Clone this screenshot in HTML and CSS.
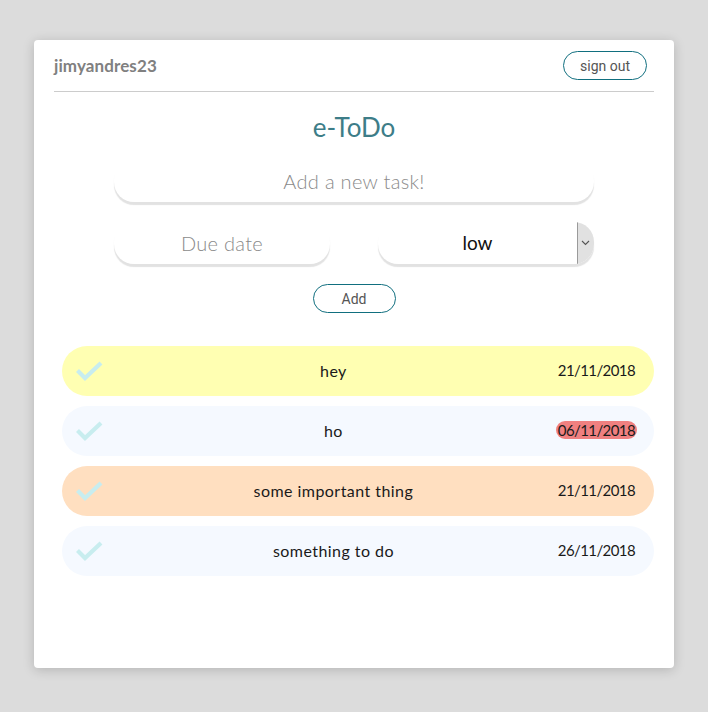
FILE: index.html
```html
<!DOCTYPE html>
<html>
<head>
<meta charset="utf-8">
<link rel="stylesheet" href="styles.css">
</head>
<body>
<div class="card">
  <header class="top">
    <span class="user">jimyandres23</span>
    <button class="btn signout">sign out</button>
  </header>
  <h1 class="title">e-ToDo</h1>
  <form class="form">
    <div class="field wide"><span class="ph">Add a new task!</span></div>
    <div class="row">
      <div class="field half"><span class="ph">Due date</span></div>
      <div class="field half select">
        <span class="val">low</span>
        <span class="arrow"><svg width="9" height="6" viewBox="0 0 9 6"><path d="M1 1 L4.5 4.5 L8 1" fill="none" stroke="#555" stroke-width="1.1"/></svg></span>
      </div>
    </div>
    <button type="button" class="btn add">Add</button>
  </form>
  <ul class="list">
    <li class="item yellow">
      <svg class="check" width="30" height="22" viewBox="0 0 30 22"><path d="M2.5 10.5 L10 18 L26 3" fill="none" stroke="#c8edef" stroke-width="4.2"/></svg>
      <span class="text">hey</span>
      <span class="date">21/11/2018</span>
    </li>
    <li class="item pale">
      <svg class="check" width="30" height="22" viewBox="0 0 30 22"><path d="M2.5 10.5 L10 18 L26 3" fill="none" stroke="#c8edef" stroke-width="4.2"/></svg>
      <span class="text">ho</span>
      <span class="date late">06/11/2018</span>
    </li>
    <li class="item peach">
      <svg class="check" width="30" height="22" viewBox="0 0 30 22"><path d="M2.5 10.5 L10 18 L26 3" fill="none" stroke="#c8edef" stroke-width="4.2"/></svg>
      <span class="text">some important thing</span>
      <span class="date">21/11/2018</span>
    </li>
    <li class="item pale">
      <svg class="check" width="30" height="22" viewBox="0 0 30 22"><path d="M2.5 10.5 L10 18 L26 3" fill="none" stroke="#c8edef" stroke-width="4.2"/></svg>
      <span class="text">something to do</span>
      <span class="date">26/11/2018</span>
    </li>
  </ul>
</div>
</body>
</html>
```
FILE: styles.css
```css
* { box-sizing: border-box; }
html, body { margin: 0; padding: 0; }
body {
  background: #dcdcdc;
  font-family: "Lato", "Noto Sans", sans-serif;
  height: 712px;
  overflow: hidden;
}
.card {
  width: 640px;
  height: 628px;
  margin: 40px auto 0;
  background: #fff;
  border-radius: 4px;
  box-shadow: 0 2px 12px rgba(0,0,0,0.18);
  padding: 0 20px;
}
.top {
  display: flex;
  justify-content: space-between;
  align-items: center;
  height: 52px;
  border-bottom: 1px solid #cccccc;
  padding-right: 7px;
}
.user {
  font-size: 17px;
  font-weight: 700;
  color: #808080;
  letter-spacing: 0.1px;
}
.btn {
  background: #fff;
  border: 1.5px solid #116f7f;
  border-radius: 15px;
  height: 29px;
  font-family: "Roboto", sans-serif;
  font-size: 14px;
  color: #555;
  padding: 0;
  cursor: pointer;
}
.signout { width: 84px; }
.title {
  margin: 21px 0 0;
  text-align: center;
  font-size: 26px;
  line-height: 28px;
  font-weight: 400;
  color: #3d7d88;
}
.form {
  display: flex;
  flex-direction: column;
  align-items: center;
  margin-top: 19px;
}
.field {
  height: 42px;
  border-radius: 20px;
  background: #fff;
  box-shadow: 0 3px 1px #e2e2e2;
  display: flex;
  align-items: center;
  justify-content: center;
  font-size: 20px;
}
.wide { width: 480px; }
.ph { color: #8a8a8a; font-weight: 300; letter-spacing: 0.3px; }
.row {
  display: flex;
  gap: 48px;
  margin-top: 20px;
}
.half { width: 216px; }
.select {
  justify-content: flex-start;
  overflow: hidden;
  align-items: stretch;
}
.val {
  flex: 1;
  display: flex;
  align-items: center;
  justify-content: center;
  color: #111;
  font-size: 19px;
  padding-bottom: 2px;
}
.arrow {
  width: 17px;
  background: #e1e1e1;
  border-left: 1px solid #9a9a9a;
  display: flex;
  align-items: center;
  justify-content: center;
  padding-right: 2px;
}
.add { width: 83px; margin-top: 20px; }
.list {
  list-style: none;
  margin: 33px 0 0;
  padding: 0 0 0 8px;
  display: flex;
  flex-direction: column;
  gap: 10px;
}
.item {
  height: 50px;
  border-radius: 25px;
  display: flex;
  align-items: center;
  padding: 0 17px 2px 13px;
  color: #1a1a1a;
}
.yellow { background: #ffffb2; }
.pale { background: #f5f9ff; }
.peach { background: #ffdfc0; }
.check { flex: none; margin-top: 2px; margin-right: 6px; }
.text { flex: 1; text-align: center; font-size: 16px; letter-spacing: 0.45px; }
.date { padding: 0 2px; font-size: 15px; letter-spacing: -0.6px; }
.late { background: #f08080; border-radius: 9px; }
```
